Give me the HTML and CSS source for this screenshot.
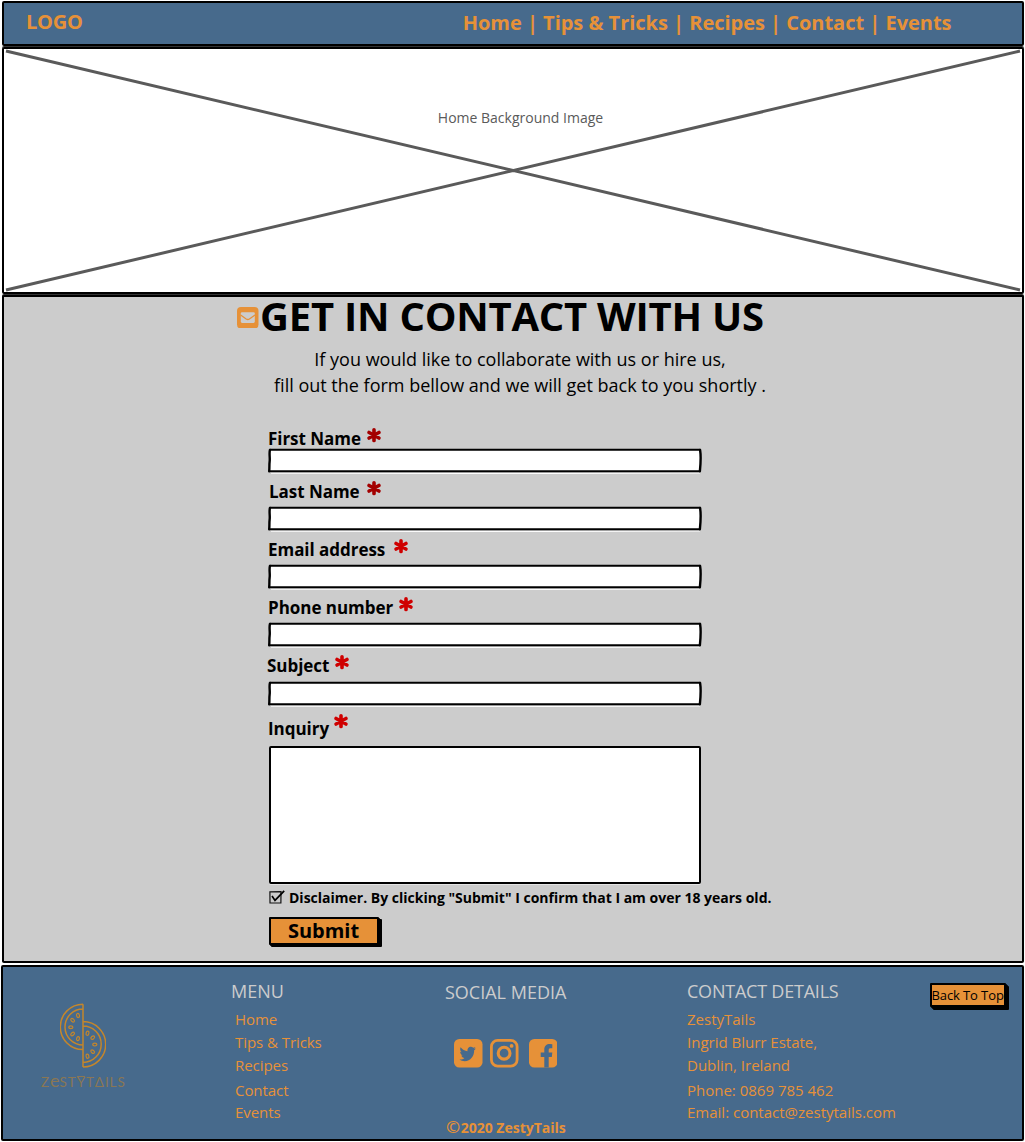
FILE: index.html
```html
<!DOCTYPE html>
<html lang="en">
<head>
<meta charset="utf-8">
<title>ZestyTails – Contact</title>
<link rel="stylesheet" href="styles.css">
</head>
<body>
<svg width="0" height="0" class="defs" aria-hidden="true">
  <symbol id="asterisk" viewBox="0 0 14 14.5">
    <path d="M7 1.8V12.7M2.1 4.5L11.9 10M11.9 4.5L2.1 10" fill="none" stroke="currentColor" stroke-width="3.6" stroke-linecap="round"/>
  </symbol>
  <symbol id="frame" viewBox="0 0 434 26">
    <path d="M3 25.2L250 25.6L432 25" fill="none" stroke="#fff" stroke-width="1"/>
    <path d="M2 2L433 2L432.4 23.6L1.6 23.6Z" fill="#fff"/>
    <path d="M1.8 1.8H432.4" fill="none" stroke="#000" stroke-width="2"/>
    <path d="M1.3 23.2H432.4" fill="none" stroke="#000" stroke-width="2"/>
    <path d="M1.9 2C1 6 2.2 10 1.6 14C1.2 17 1.6 20 1.2 23.2" fill="none" stroke="#000" stroke-width="2.4" stroke-linecap="round"/>
    <path d="M432.1 2C432.9 7 432.8 14 431.9 23.2" fill="none" stroke="#000" stroke-width="2.4" stroke-linecap="round"/>
  </symbol>
</svg>

<header class="topbar">
  <a class="brand">LOGO</a>
  <nav class="nav">Home | Tips &amp; Tricks | Recipes | Contact | Events</nav>
</header>

<section class="hero">
  <svg class="cross" viewBox="0 0 1018 243" preserveAspectRatio="none"><path d="M2 2L1016 241M1016 2L2 241" stroke="#5a5a5a" stroke-width="3"/></svg>
  <p class="hero-label">Home Background Image</p>
</section>

<main class="contact">
  <div class="title-row">
    <svg class="mail" viewBox="0 0 21.5 21.5"><rect width="21.5" height="21.5" rx="4" fill="#e69138"/><rect x="3.8" y="5.3" width="14" height="10.6" rx="1.3" fill="#ccc"/><path d="M3.6 8L9.2 12Q10.8 13 12.4 12L18 8" fill="none" stroke="#e69138" stroke-width="1.3"/></svg>
    <h1 class="title">GET IN CONTACT WITH US</h1>
  </div>
  <p class="intro">If you would like to collaborate with us or hire us,<br>fill out the form bellow and we will get back to you shortly .</p>

  <form class="form">
    <div class="field first">
      <label class="label dark"><span>First Name</span><svg class="req"><use href="#asterisk"/></svg></label>
      <div class="input"><svg class="frame"><use href="#frame"/></svg></div>
    </div>
    <div class="field last">
      <label class="label dark"><span>Last Name</span><svg class="req"><use href="#asterisk"/></svg></label>
      <div class="input"><svg class="frame"><use href="#frame"/></svg></div>
    </div>
    <div class="field email">
      <label class="label"><span>Email address</span><svg class="req"><use href="#asterisk"/></svg></label>
      <div class="input"><svg class="frame"><use href="#frame"/></svg></div>
    </div>
    <div class="field phone">
      <label class="label"><span>Phone number</span><svg class="req"><use href="#asterisk"/></svg></label>
      <div class="input"><svg class="frame"><use href="#frame"/></svg></div>
    </div>
    <div class="field subject">
      <label class="label"><span>Subject</span><svg class="req"><use href="#asterisk"/></svg></label>
      <div class="input"><svg class="frame"><use href="#frame"/></svg></div>
    </div>
    <div class="field inquiry">
      <label class="label"><span>Inquiry</span><svg class="req"><use href="#asterisk"/></svg></label>
      <div class="textarea"></div>
    </div>
    <label class="disclaimer">
      <svg class="check" viewBox="0 0 16 14"><path d="M.9 1.9L12 1.6L11.9 12.8L1 13Z" fill="none" stroke="#111" stroke-width="1.2"/><path d="M3 6L6 10.4L15.2.8" fill="none" stroke="#000" stroke-width="1.7"/></svg>
      <span>Disclaimer. By clicking "Submit" I confirm that I am over 18 years old.</span>
    </label>
    <button class="submit" type="button">Submit</button>
  </form>
</main>

<footer class="footer">
  <div class="logo">
    <svg class="melon" viewBox="0 0 46 65" fill="none" stroke="#c4862b">
      <path d="M23 1.2V64M23 1.2A22.7 22.7 0 0 0 23 46.6M23 6A17.8 17.8 0 0 0 23 42M23 18.6A22.7 22.7 0 0 1 23 64M23 23A18 18 0 0 1 23 59.4" stroke-width="1.5"/>
      <g stroke-width="1.2">
        <ellipse cx="18" cy="12.5" rx="1.4" ry="2.1" transform="rotate(-15 18 12.5)"/>
        <ellipse cx="12.6" cy="17.2" rx="1.4" ry="2.1" transform="rotate(-50 12.6 17.2)"/>
        <ellipse cx="10.8" cy="24.2" rx="2.1" ry="1.4"/>
        <ellipse cx="12.6" cy="31" rx="1.4" ry="2.1" transform="rotate(50 12.6 31)"/>
        <ellipse cx="18" cy="35.6" rx="1.4" ry="2.1" transform="rotate(15 18 35.6)"/>
        <ellipse cx="27.5" cy="30.2" rx="1.4" ry="2.1" transform="rotate(15 27.5 30.2)"/>
        <ellipse cx="32.7" cy="34.6" rx="1.4" ry="2.1" transform="rotate(50 32.7 34.6)"/>
        <ellipse cx="34.8" cy="41.6" rx="2.1" ry="1.4"/>
        <ellipse cx="32.7" cy="48.6" rx="1.4" ry="2.1" transform="rotate(-50 32.7 48.6)"/>
        <ellipse cx="27.5" cy="53.2" rx="1.4" ry="2.1" transform="rotate(-15 27.5 53.2)"/>
      </g>
    </svg>
    <p class="wordmark">Z<span class="tall-e">e</span>ST<span class="wide-y">Y</span>T<span>Δ</span>ILS</p>
  </div>

  <div class="menu">
    <h2 class="heading">MENU</h2>
    <ul class="list">
      <li>Home</li><li>Tips &amp; Tricks</li><li class="spaced">Recipes</li><li class="tight">Contact</li><li>Events</li>
    </ul>
  </div>

  <div class="social">
    <h2 class="heading">SOCIAL MEDIA</h2>
    <div class="icons">
      <svg viewBox="0 0 28.5 28.5"><rect width="28.5" height="28.5" rx="5.3" fill="#e69138"/><path transform="translate(2.24 .68) scale(.051 .0557)" fill="#476a8c" d="M351.1 190.8c.2 2.8.2 5.7.2 8.5 0 86.7-66 186.6-186.6 186.6-37.2 0-71.7-10.8-100.7-29.4 5.3.6 10.4.8 15.8.8 30.7 0 58.9-10.4 81.4-28-28.8-.6-53-19.5-61.3-45.5 10.1 1.5 19.2 1.5 29.6-1.2-30-6.1-52.5-32.5-52.5-64.4v-.8c8.7 4.9 18.9 7.9 29.6 8.3a65.447 65.447 0 0 1-29.2-54.6c0-12.2 3.2-23.4 8.9-33.1 32.3 39.8 80.8 65.8 135.2 68.6-9.3-44.5 24-80.6 64-80.6 18.9 0 35.9 7.9 47.9 20.7 14.8-2.8 29-8.3 41.6-15.8-4.9 15.2-15.2 28-28.8 36.1 13.2-1.4 26-5.1 37.8-10.2-8.9 13.1-20.1 24.7-32.9 34z"/></svg>
      <svg viewBox="0 0 28.5 28.5" fill="none" stroke="#e69138"><rect x="1.4" y="1.4" width="25.7" height="25.7" rx="6.3" stroke-width="2.8"/><circle cx="14.1" cy="14.2" r="5.9" stroke-width="3.1"/><circle cx="21.6" cy="6.9" r="1.9" fill="#e69138" stroke="none"/></svg>
      <svg class="fb" viewBox="0 0 28.5 28.5"><rect width="28.5" height="28.5" rx="5.3" fill="#e69138"/><path fill="#476a8c" d="M15.3 28.5V18H11.7V13.4H15.3V10.6C15.3 7 17.5 5 20.8 5L23.3 5.2V9.2H21.3C19.9 9.2 19.7 10 19.7 11.2V13.4H23.3L22.8 18H19.7V28.5Z"/></svg>
    </div>
    <p class="copyright"><span class="mark">©</span>2020 ZestyTails</p>
  </div>

  <div class="details">
    <h2 class="heading">CONTACT DETAILS</h2>
    <ul class="list">
      <li>ZestyTails</li><li>Ingrid Blurr Estate,</li><li class="spaced">Dublin, Ireland</li><li class="tight">Phone: 0869 785 462</li><li>Email: contact@zestytails.com</li>
    </ul>
  </div>

  <button class="to-top" type="button">Back To Top</button>
</footer>
</body>
</html>
```
FILE: styles.css
```css
* { box-sizing: border-box; }

body {
  margin: 0;
  padding: 1px 1px 0 2px;
  background: #fff;
  color: #000;
  font-family: "Open Sans", "Noto Sans", sans-serif;
}

h1, h2, p, ul { margin: 0; padding: 0; }
.defs { position: absolute; }

/* top bar */
.topbar {
  display: flex;
  justify-content: space-between;
  height: 45px;
  padding: 6px 70.5px 0 22px;
  border: 2px solid #000;
  border-radius: 2px;
  background: #476a8c;
  color: #e69138;
  font-weight: 700;
  font-size: 20px;
  line-height: 26px;
}
.brand { letter-spacing: -0.2px; }
.nav { padding-top: 1px; letter-spacing: -0.02px; }

/* hero placeholder */
.hero {
  position: relative;
  height: 247px;
  margin-top: 1px;
  border: 2px solid #000;
  border-radius: 2px;
  box-shadow: 0 -1px #333;
}
.cross {
  position: absolute;
  inset: 0;
  width: 1018px;
  height: 243px;
}
.hero-label {
  position: relative;
  padding: 59px 0 0 15px;
  color: #5a5a5a;
  font-size: 14px;
  line-height: 20px;
  text-align: center;
}

/* contact section */
.contact {
  height: 668px;
  margin-top: 1px;
  padding-top: 1px;
  border: 2px solid #000;
  border-radius: 2px;
  box-shadow: 0 -1px #333;
  background: #ccc;
}
.title-row {
  display: flex;
  padding: 1px 0 0 233px;
}
.mail {
  width: 21.5px;
  height: 21.5px;
  margin-top: 7.5px;
}
.title {
  margin-left: 1.5px;
  font-size: 40px;
  line-height: 33px;
  letter-spacing: -0.24px;
}
.intro {
  margin-top: 14px;
  padding-left: 14px;
  font-size: 18px;
  line-height: 26px;
  text-align: center;
}

.form {
  width: 520px;
  margin: 30px 0 0 264px;
}
.field { padding-top: 9px; }
.first { padding-top: 0; }
.inquiry { padding-top: 13px; }

.label {
  display: flex;
  align-items: flex-start;
  height: 26px;
  color: #cf0000;
  font-size: 17px;
  font-weight: 700;
  line-height: 20px;
}
.label.dark { color: #a30000; }
.label span { padding-top: 1px; color: #000; letter-spacing: -0.04px; }
.req { width: 14px; height: 14.5px; }

.first .label { height: 21px; }
.first .label span { width: 98.5px; }
.last .label { margin-left: 1px; }
.last .label span { width: 97.5px; }
.email .label span { width: 125.5px; }
.phone .label span { width: 130.5px; }
.subject .label { height: 27px; margin-left: -1px; }
.subject .label span { width: 68px; }
.inquiry .label { height: 28px; }
.inquiry .label span { width: 65.5px; }
.inquiry .req { margin-top: -4px; }

.input { display: flex; height: 23px; }
.frame {
  flex: none;
  width: 434px;
  height: 26px;
  margin-top: -1px;
}
.textarea {
  width: 432px;
  height: 138px;
  margin-left: 1px;
  border: 2px solid #000;
  border-radius: 2px;
  box-shadow: 0 1px #e4e4e4;
  background: #fff;
}

.disclaimer {
  display: flex;
  gap: 4px;
  padding: 5px 0 0 1px;
  font-size: 14px;
  font-weight: 700;
  line-height: 18px;
  white-space: nowrap;
}
.check {
  width: 16px;
  height: 14px;
  margin-top: 1px;
}

.submit {
  display: block;
  width: 110px;
  height: 28px;
  margin: 10px 0 0 1px;
  padding: 0 1px 0 0;
  border: 2px solid #000;
  border-radius: 1px;
  box-shadow: 1px 1px #000, 2px 2px #000, 3px 2px #000;
  background: #e69138;
  color: #000;
  font: 700 20px/24px "Open Sans", sans-serif;
}

/* footer */
.footer {
  display: grid;
  grid-template-columns: 228px 214px 242px 242.5px 1fr;
  align-items: start;
  height: 176px;
  margin: 2px 0 0 -1px;
  padding-top: 12px;
  border: 2px solid #000;
  border-radius: 2px;
  background: #476a8c;
  color: #e69138;
}
.heading {
  color: #ccc;
  font-size: 18px;
  font-weight: 400;
  line-height: 24px;
}
.details .heading { letter-spacing: -0.22px; }
.list {
  margin-top: 5px;
  list-style: none;
  font-size: 15px;
  line-height: 23px;
}
.menu .list { padding-left: 4px; }
.menu .list li { letter-spacing: -0.06px; }
.spaced { padding-bottom: 2px; }
.tight { height: 22px; }

.logo { padding: 24px 0 0 37px; }
.melon {
  display: block;
  width: 46px;
  height: 65px;
  margin-left: 20.3px;
}
.wordmark {
  display: flex;
  align-items: baseline;
  margin: 2px 0 0 1px;
  color: #8a7754;
  font-family: Lato, sans-serif;
  font-size: 13.5px;
  font-weight: 400;
  line-height: 20px;
  letter-spacing: 0.9px;
}
.tall-e { font-size: 18px; line-height: 20px; letter-spacing: 0; }
.wide-y {
  background: linear-gradient(#8a7754, #8a7754) 0 4px / 8px 1px no-repeat;
}

.social .heading { padding-top: 1px; }
.icons {
  display: flex;
  gap: 7.6px;
  margin: 35px 0 0 9px;
}
.icons svg { width: 28.5px; height: 28.5px; }
.icons .fb { margin-left: 2.5px; }
.copyright {
  margin: 50px 0 0 1px;
  font-size: 14px;
  font-weight: 700;
  line-height: 20px;
}
.mark {
  margin-right: 0.5px;
  font-size: 17px;
  font-weight: 600;
  line-height: 1;
}

.to-top {
  width: 76px;
  height: 24px;
  margin-top: 4px;
  padding: 0;
  border: 2px solid #000;
  border-radius: 1px;
  box-shadow: 1px 1px #000, 2px 2px #000, 3px 3px #000;
  background: #e69138;
  color: #000;
  font: 400 13px/20px "Open Sans", sans-serif;
  letter-spacing: -0.1px;
  white-space: nowrap;
}
```
